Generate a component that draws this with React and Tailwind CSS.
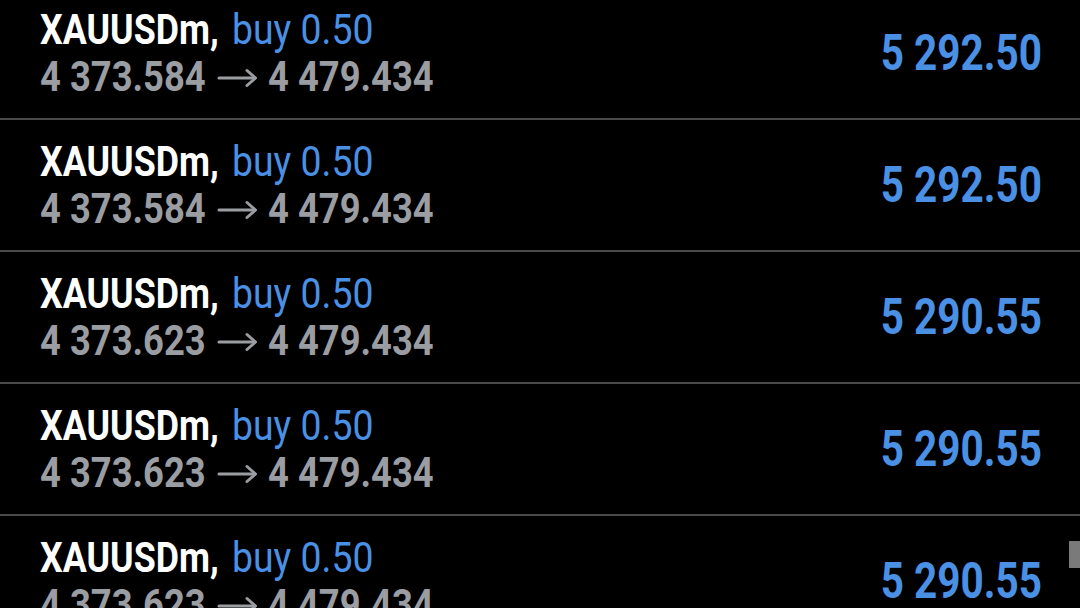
const rows = [
  { from: '4 373.584', to: '4 479.434', profit: '5 292.50' },
  { from: '4 373.584', to: '4 479.434', profit: '5 292.50' },
  { from: '4 373.623', to: '4 479.434', profit: '5 290.55' },
  { from: '4 373.623', to: '4 479.434', profit: '5 290.55' },
  { from: '4 373.623', to: '4 479.434', profit: '5 290.55' },
];

function Arrow() {
  return (
    <svg width="41" height="20" viewBox="0 0 41 20" className="mt-[3px] shrink-0" fill="none" stroke="#9a9da2" strokeWidth="3" strokeLinecap="round" strokeLinejoin="round">
      <path d="M2 10H38" />
      <path d="M30 2.5L38.5 10L30 17.5" />
    </svg>
  );
}

function TradeRow({ from, to, profit }) {
  return (
    <div className="h-[132px] shrink-0 flex items-center justify-between pl-[40px] pr-[38px] border-b-2 border-[#4a4a4d]">
      <div className="flex flex-col">
        <div className="h-[47px] flex items-center text-[42px] leading-[47px] whitespace-nowrap">
          <div className="w-[192px] shrink-0">
            <span className="inline-block origin-left scale-x-[0.852] font-bold text-white">XAUUSDm,</span>
          </div>
          <div className="w-[150px] shrink-0">
            <span className="inline-block origin-left scale-x-[0.89] text-[#4a90e4]">buy 0.50</span>
          </div>
        </div>
        <div className="h-[47px] flex items-center text-[43px] leading-[47px] font-bold text-[#9a9da2] whitespace-nowrap">
          <div className="w-[177px] shrink-0">
            <span className="inline-block origin-left scale-x-[0.846]">{from}</span>
          </div>
          <Arrow />
          <div className="ml-[10px] w-[170px] shrink-0">
            <span className="inline-block origin-left scale-x-[0.846]">{to}</span>
          </div>
        </div>
      </div>
      <div className="h-[50px] leading-[50px] text-[50px] font-bold text-[#4a90e4] whitespace-nowrap">
        <span className="inline-block origin-right scale-x-[0.81]">{profit}</span>
      </div>
    </div>
  );
}

export default function App() {
  return (
    <div className="relative w-[1080px] h-[608px] overflow-hidden bg-black" style={{ fontFamily: 'Roboto, "Liberation Sans", sans-serif' }}>
      <div className="flex flex-col -mt-[12px]">
        {rows.map((r, i) => (
          <TradeRow key={i} {...r} />
        ))}
      </div>
      <div className="absolute right-0 top-[541px] w-[11px] h-[27px] bg-[#7a7a7a]" />
    </div>
  );
}
